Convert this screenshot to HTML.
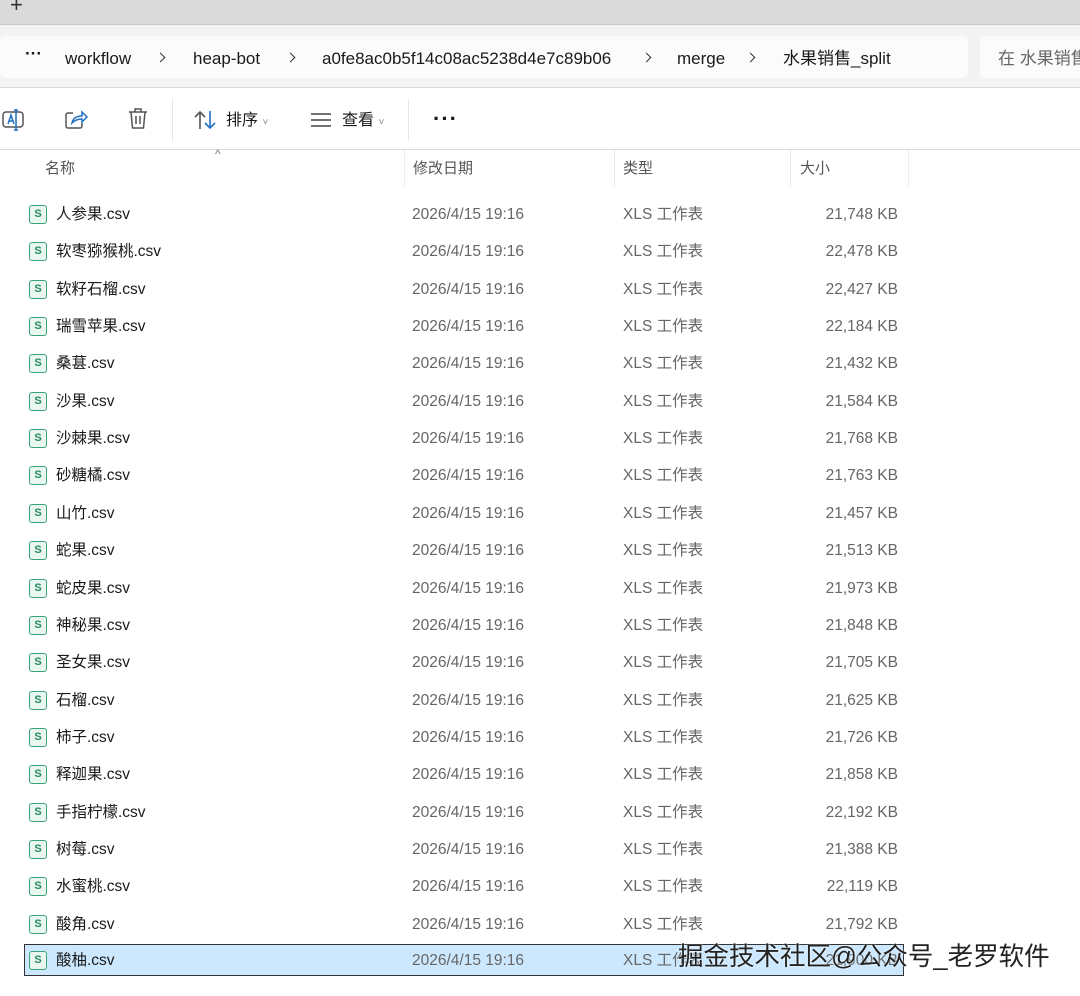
<!DOCTYPE html>
<html><head><meta charset="utf-8"><style>
*{margin:0;padding:0;box-sizing:border-box}
body{width:1080px;height:996px;background:#fff;font-family:"Liberation Sans","Noto Sans CJK SC",sans-serif;position:relative;overflow:hidden;color:#1a1a1a}
.abs{position:absolute;white-space:nowrap;line-height:22px}
.tabbar{position:absolute;left:0;top:0;width:1080px;height:25px;background:#dadada;border-bottom:1px solid #c8c8c8}
.addr{position:absolute;left:0;top:25px;width:1080px;height:63px;background:#f3f3f3;border-bottom:1px solid #d8d8d8}
.pill{position:absolute;top:11px;height:42px;background:#fbfbfb;border-radius:5px}
.bc{font-size:17px;color:#1a1a1a;top:23px}
.chev{position:absolute;top:29px;width:7px;height:7px;border-top:1.3px solid #333;border-right:1.3px solid #333;transform:rotate(45deg)}
.tool{position:absolute;left:0;top:89px;width:1080px;height:61px;background:#fff;border-bottom:1px solid #d8d8d8}
.hdr{font-size:15px;color:#555;top:158px}
.row{position:absolute;left:0;width:1080px;height:32px;font-size:15.5px;line-height:20px}
.row span{position:absolute;top:8px;white-space:nowrap;line-height:20px}
.n{left:56px;color:#1a1a1a}
.d{left:412px;color:#666}
.t{left:623px;color:#666}
.s{right:182px;color:#666}
.ic{position:absolute;left:29px;top:8px;width:18px;height:19px;border:1.5px solid #3aa37a;border-radius:3px;background:#eaf7f0;color:#2a8a60;font-size:11px;font-weight:bold;text-align:center;line-height:16px}
.sep{position:absolute;top:150px;width:1px;height:36px;background:#ececec}
</style></head><body>
<div class="tabbar"><div class="abs" style="left:10px;top:-6px;font-size:22px;color:#333">+</div></div>
<div class="addr">
<div class="pill" style="left:0;width:968px"></div>
<div class="pill" style="left:980px;width:110px"></div>
<div class="abs bc" style="left:25px;top:18px;font-weight:bold">···</div>
<div class="abs bc" style="left:65px">workflow</div>
<div class="chev" style="left:157px"></div>
<div class="abs bc" style="left:193px">heap-bot</div>
<div class="chev" style="left:287px"></div>
<div class="abs bc" style="left:322px">a0fe8ac0b5f14c08ac5238d4e7c89b06</div>
<div class="chev" style="left:643px"></div>
<div class="abs bc" style="left:677px">merge</div>
<div class="chev" style="left:747px"></div>
<div class="abs bc" style="left:783px">水果销售_split</div>
<div class="abs bc" style="left:998px;color:#666">在 水果销售</div>
</div>
<div class="tool">
<svg class="abs" style="left:2px;top:20px" width="24" height="22" viewBox="0 0 24 22" fill="none" stroke="#555" stroke-width="1.5"><rect x="1" y="3" width="20" height="15" rx="3"/><path d="M6 15l3-9 3 9M7 12h4" stroke="#1f6fc0"/><path d="M14 1v20M12 1h4M12 21h4" stroke="#1f6fc0"/></svg>
<svg class="abs" style="left:64px;top:21px" width="24" height="20" viewBox="0 0 24 20" fill="none" stroke="#555" stroke-width="1.5"><path d="M9 3H4a2 2 0 0 0-2 2v11a2 2 0 0 0 2 2h12a2 2 0 0 0 2-2v-3"/><path d="M8 13c1-5 5-7 10-7V2l5 5-5 5V9c-4 0-7 1-10 4z" stroke="#1f6fc0"/></svg>
<svg class="abs" style="left:128px;top:19px" width="20" height="22" viewBox="0 0 20 22" fill="none" stroke="#555" stroke-width="1.5"><path d="M1 4h18M7 4V1h6v3M3 4l1.5 16h11L17 4M8 8v8M12 8v8"/></svg>
<div class="abs" style="left:172px;top:10px;width:1px;height:42px;background:#e5e5e5"></div>
<svg class="abs" style="left:194px;top:21px" width="24" height="20" viewBox="0 0 24 20" fill="none" stroke-width="1.6"><path d="M6 19V2M1 7l5-5 5 5" stroke="#555"/><path d="M16 1v17M11 13l5 5 5-5" stroke="#1f6fc0"/></svg>
<div class="abs" style="left:226px;top:21px;font-size:16px">排序 <span style="font-size:10px;color:#888">˅</span></div>
<svg class="abs" style="left:311px;top:24px" width="20" height="14" viewBox="0 0 20 14" stroke="#444" stroke-width="1.4"><path d="M0 1h20M0 7h20M0 13h20"/></svg>
<div class="abs" style="left:342px;top:21px;font-size:16px">查看 <span style="font-size:10px;color:#888">˅</span></div>
<div class="abs" style="left:408px;top:10px;width:1px;height:42px;background:#e5e5e5"></div>
<div class="abs" style="left:433px;top:19px;font-size:22px;font-weight:bold;letter-spacing:1px">···</div>
</div>
<div class="abs" style="left:215px;top:143px;font-size:12px;color:#777">^</div>
<div class="abs hdr" style="left:45px">名称</div>
<div class="sep" style="left:404px"></div>
<div class="abs hdr" style="left:413px">修改日期</div>
<div class="sep" style="left:614px"></div>
<div class="abs hdr" style="left:623px">类型</div>
<div class="sep" style="left:790px"></div>
<div class="abs hdr" style="left:800px">大小</div>
<div class="sep" style="left:908px"></div>
<div id="rows"></div>
<script>
var d=[["人参果","21,748"],["软枣猕猴桃","22,478"],["软籽石榴","22,427"],["瑞雪苹果","22,184"],["桑葚","21,432"],["沙果","21,584"],["沙棘果","21,768"],["砂糖橘","21,763"],["山竹","21,457"],["蛇果","21,513"],["蛇皮果","21,973"],["神秘果","21,848"],["圣女果","21,705"],["石榴","21,625"],["柿子","21,726"],["释迦果","21,858"],["手指柠檬","22,192"],["树莓","21,388"],["水蜜桃","22,119"],["酸角","21,792"],["酸柚","21,900"]];
var h="";d.forEach(function(r,i){var y=197+i*37.35;var sel=i==20;
h+='<div class="row" style="top:'+(sel?944:y)+'px;'+(sel?'left:24px;width:880px;height:32px;background:#cce8ff;border:1px solid #333;':'')+'"><div class="ic" style="'+(sel?'left:4px;top:6px':'')+'">S</div><span class="n" style="'+(sel?'left:31px;top:6px':'')+'">'+r[0]+'.csv</span><span class="d" style="'+(sel?'left:387px;top:6px':'')+'">2026/4/15 19:16</span><span class="t" style="'+(sel?'left:598px;top:6px':'')+'">XLS 工作表</span><span class="s" style="'+(sel?'right:5px;top:6px':'')+'">'+r[1]+' KB</span></div>';});
document.getElementById("rows").innerHTML=h;
</script>
<div class="abs" style="left:678px;top:942px;font-size:25.5px;line-height:30px;color:#222;text-shadow:0 0 2px #fff">掘金技术社区@公众号_老罗软件</div>
</body></html>
